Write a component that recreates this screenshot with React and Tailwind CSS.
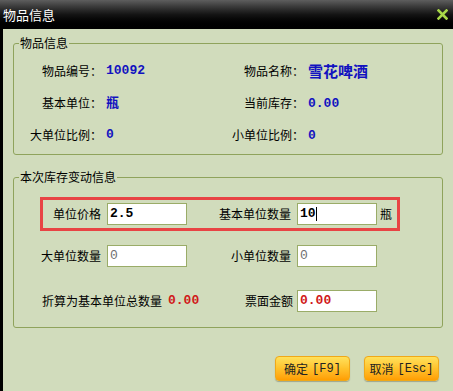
import React from "react";

const cjk = { fontFamily: '"Noto Sans CJK SC", "Noto Sans", sans-serif' };
const mono = { fontFamily: '"Liberation Mono", "DejaVu Sans Mono", monospace' };

function Box({ children, className = "" }) {
  return (
    <div className={"w-[80px] h-[22px] shrink-0 bg-white border border-[#9aac68] flex items-center pl-[2px] " + className}>
      {children}
    </div>
  );
}

function InfoRow({ l1, v1, l2, v2 }) {
  return (
    <div className="flex items-center h-[32px] text-[12px] text-black whitespace-nowrap">
      <div className="w-[88px] shrink-0 text-right" style={cjk}>{l1}</div>
      <div className="w-[98px] shrink-0 pl-[4px] text-[13px] font-bold text-[#1212c0]" style={mono}>{v1}</div>
      <div className="w-[104px] shrink-0 text-right" style={cjk}>{l2}</div>
      <div className="pl-[4px] font-bold text-[#1212c0]">{v2}</div>
    </div>
  );
}

export default function App() {
  return (
    <div className="w-[453px] h-[391px] overflow-hidden flex flex-col bg-[#d1dcbc]" style={cjk}>
      <div className="h-[29px] shrink-0 flex items-center justify-between pl-[3px] pr-[5px] bg-gradient-to-b from-[#5e5e5e] via-[#141414] to-black">
        <span className="text-white text-[13px] leading-none">物品信息</span>
        <svg width="11" height="11" viewBox="0 0 11 11">
          <path d="M1.5 1.5 L9.5 9.5 M9.5 1.5 L1.5 9.5" stroke="#a8d848" strokeWidth="2.6" strokeLinecap="square" />
        </svg>
      </div>
      <div className="flex-1 flex flex-col border-l-[3px] border-black pt-[6px]">
        <fieldset className="ml-[10px] w-[430px] border border-[#8fa35c] rounded-[3px] pt-[4px] pb-[3px]">
          <legend className="ml-[5px] px-[1px] text-[12px] leading-[16px] text-black">物品信息</legend>
          <InfoRow l1="物品编号：" v1="10092" l2="物品名称：" v2={<span className="text-[15px]" style={cjk}>雪花啤酒</span>} />
          <InfoRow l1="基本单位：" v1={<span className="text-[13px]" style={cjk}>瓶</span>} l2="当前库存：" v2={<span className="text-[13px]" style={mono}>0.00</span>} />
          <InfoRow l1="大单位比例：" v1="0" l2="小单位比例：" v2={<span className="text-[13px]" style={mono}>0</span>} />
        </fieldset>

        <fieldset className="ml-[10px] mt-[14px] w-[430px] border border-[#8fa35c] rounded-[3px] pb-[15px]">
          <legend className="ml-[5px] px-[1px] text-[12px] leading-[16px] text-black">本次库存变动信息</legend>
          <div className="mt-[12px] ml-[26px] w-[360px] h-[34px] border-[3px] border-[#e84444] flex items-center text-[12px] text-black whitespace-nowrap">
            <div className="w-[58px] shrink-0 text-right">单位价格</div>
            <Box className="ml-[6px]">
              <span className="text-[13px] font-bold text-black" style={mono}>2.5</span>
            </Box>
            <div className="w-[104px] shrink-0 text-right">基本单位数量</div>
            <Box className="ml-[6px]">
              <span className="text-[13px] font-bold text-black" style={mono}>10</span>
              <span className="w-[1px] h-[14px] bg-black" />
            </Box>
            <div className="ml-[3px]">瓶</div>
          </div>
          <div className="mt-[14px] flex items-center text-[12px] text-black whitespace-nowrap">
            <div className="w-[87px] shrink-0 text-right">大单位数量</div>
            <Box className="ml-[6px]">
              <span className="text-[13px] text-[#707070]" style={mono}>0</span>
            </Box>
            <div className="w-[104px] shrink-0 text-right">小单位数量</div>
            <Box className="ml-[6px]">
              <span className="text-[13px] text-[#707070]" style={mono}>0</span>
            </Box>
          </div>
          <div className="mt-[23px] flex items-center text-[12px] text-black whitespace-nowrap">
            <div className="w-[231px] shrink-0 flex items-center pl-[28px]">
              <span>折算为基本单位总数量</span>
              <span className="ml-[6px] text-[13px] font-bold text-[#d01818]" style={mono}>0.00</span>
            </div>
            <div className="w-[46px] shrink-0 text-right">票面金额</div>
            <Box className="ml-[6px]">
              <span className="text-[13px] font-bold text-[#d01818]" style={mono}>0.00</span>
            </Box>
          </div>
        </fieldset>

        <div className="mt-[28px] flex justify-end gap-[14px] pr-[14px]">
          <button className="w-[75px] h-[25px] rounded-[4px] border border-[#f0a818] bg-gradient-to-b from-[#ffe15a] via-[#ffc22a] to-[#ff9e00] text-[12px] text-[#222] flex items-center justify-center gap-[4px] shadow-[0_1px_1px_rgba(0,0,0,0.25)]">
            <span>确定</span>
            <span className="text-[12px]" style={mono}>[F9]</span>
          </button>
          <button className="w-[75px] h-[25px] rounded-[4px] border border-[#f0a818] bg-gradient-to-b from-[#ffe15a] via-[#ffc22a] to-[#ff9e00] text-[12px] text-[#222] flex items-center justify-center gap-[4px] shadow-[0_1px_1px_rgba(0,0,0,0.25)]">
            <span>取消</span>
            <span className="text-[12px]" style={mono}>[Esc]</span>
          </button>
        </div>
      </div>
    </div>
  );
}
